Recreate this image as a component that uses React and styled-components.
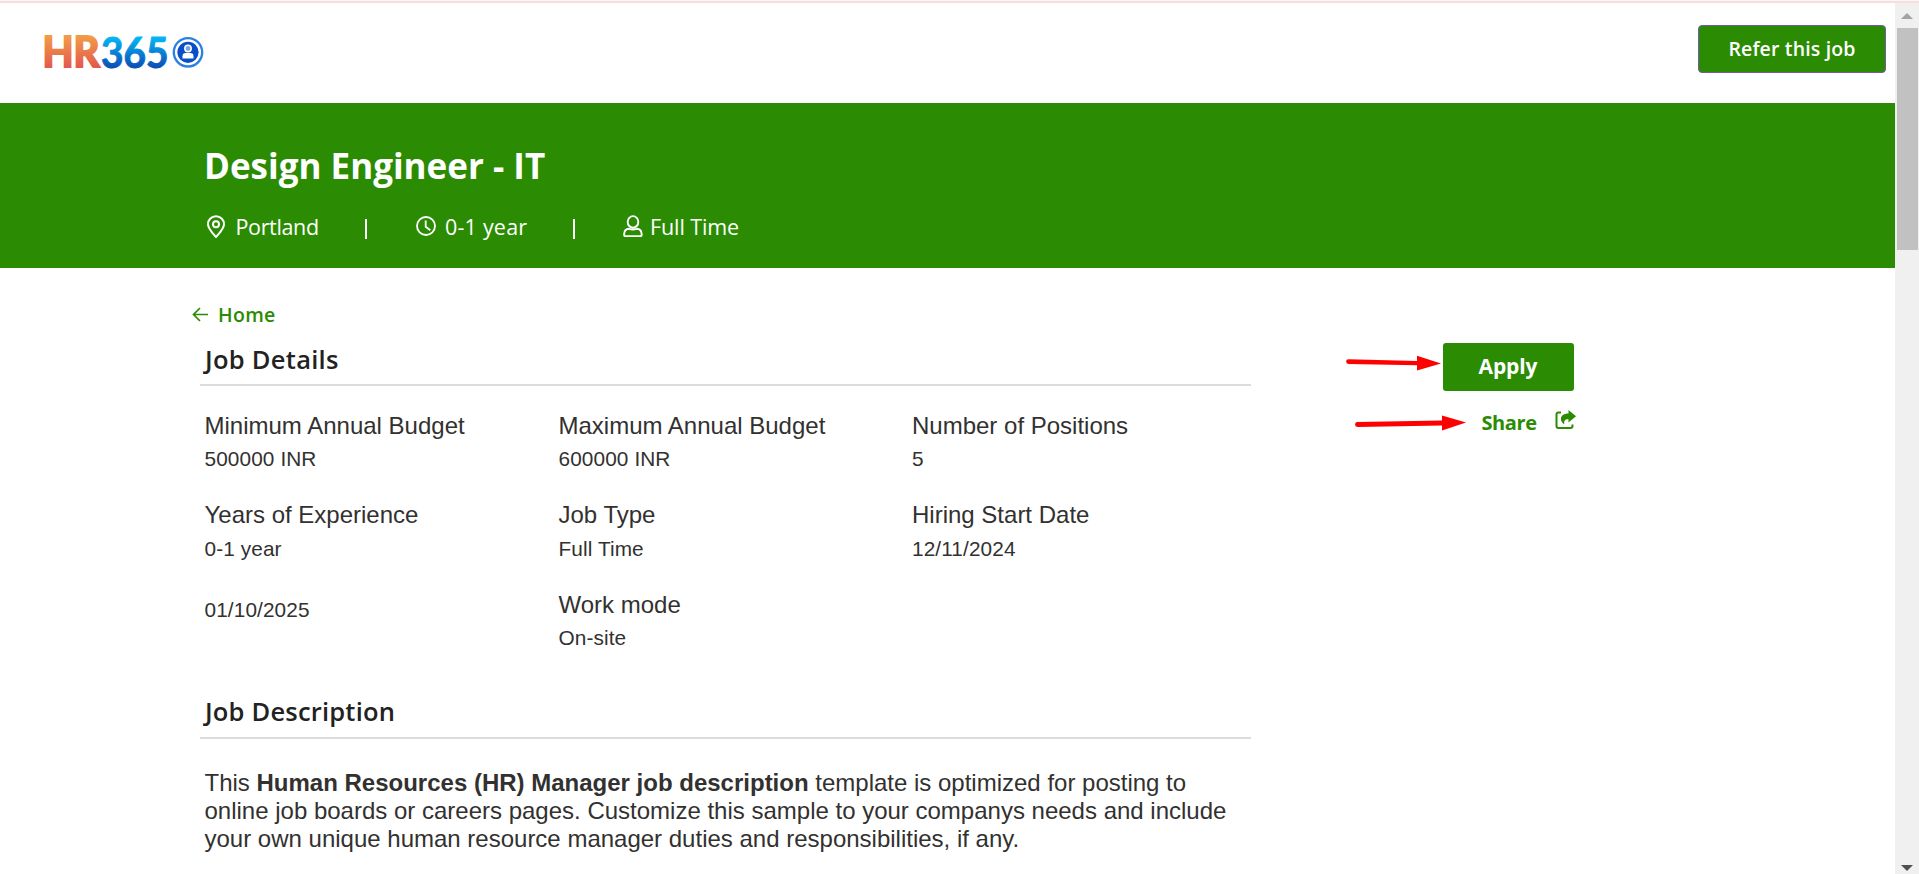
import React from "react";
import styled, { createGlobalStyle } from "styled-components";

const GREEN = "#2b8c03";

const Global = createGlobalStyle`
  * { box-sizing: border-box; }
  html, body { margin: 0; height: 874px; overflow: hidden; background: #fff; }
  h1, h2, p { margin: 0; }
`;

const ui = `"Open Sans", "Noto Sans", sans-serif`;
const body = `"Liberation Sans", Arial, sans-serif`;

const Window = styled.div`
  width: 1919px;
  height: 874px;
  display: flex;
  flex-direction: column;
  overflow: hidden;
  background: #fff;
  font-family: ${ui};
`;
const Strip = styled.div`
  flex: none;
  height: 3px;
  background: #f8dde0;
  border-top: 1px solid #fdf4f4;
`;
const Viewport = styled.div`
  flex: 1;
  display: flex;
  min-height: 0;
`;
const Page = styled.div`
  flex: 1;
  min-width: 0;
  overflow: hidden;
`;

const TopBar = styled.header`
  height: 100px;
  display: flex;
  justify-content: space-between;
  align-items: flex-start;
  padding: 22px 9px 0 40px;
`;
const Logo = styled.svg`
  width: 168px;
  height: 56px;
  font-family: Lato, sans-serif;
  font-size: 42px;
  font-weight: 700;
`;
const ReferButton = styled.button`
  width: 188px;
  height: 48px;
  padding: 0 0 1px;
  border: 1px solid #7658a8;
  border-radius: 4px;
  background: ${GREEN};
  color: #fff;
  font: 600 19.5px/28px ${ui};
  letter-spacing: 0.15px;
`;

const Hero = styled.section`
  height: 165px;
  padding: 39px 0 0 204px;
  background: ${GREEN};
  color: #fff;
`;
const Title = styled.h1`
  font-size: 35px;
  line-height: 48px;
  font-weight: 700;
  letter-spacing: 0;
`;
const Meta = styled.div`
  display: flex;
  align-items: center;
  margin-top: 22px;
  font-size: 21.5px;
  line-height: 30px;
`;
const MetaItem = styled.span`
  display: flex;
  align-items: center;
  width: ${(p) => p.$w}px;
  padding-left: ${(p) => p.$pad || 0}px;
  letter-spacing: ${(p) => p.$ls}px;
  white-space: nowrap;
  svg { flex: none; margin: -2px ${(p) => p.$gap}px 0 2px; }
`;
const Pipe = styled.i`
  width: 2px;
  height: 20px;
  margin-top: 4px;
  background: #fff;
`;

const Content = styled.main`
  display: flex;
  padding: 32px 0 0 200px;
`;
const Main = styled.div`
  width: 1051px;
  margin-right: 192px;
`;
const Back = styled.a`
  display: flex;
  align-items: center;
  gap: 10px;
  margin: 0 0 13px -8px;
  padding-top: 1px;
  height: 28px;
  color: ${GREEN};
  font-size: 19.5px;
  line-height: 28px;
  font-weight: 600;
  letter-spacing: 0.3px;
`;
const SectionTitle = styled.h2`
  height: ${(p) => p.$h}px;
  padding-left: 5px;
  border-bottom: 2px solid #dcdcdc;
  color: #222;
  font-size: 25.5px;
  line-height: 36px;
  font-weight: 600;
  letter-spacing: ${(p) => p.$ls}px;
`;
const Details = styled.div`
  display: grid;
  grid-template-columns: 354px 353.5px 1fr;
  grid-template-rows: 89.2px 89.8px 90px;
  padding: 26px 0 0 4.5px;
  height: 307px;
  color: #323130;
  font-family: ${body};
`;
const Label = styled.div`
  min-height: 5px;
  margin-bottom: ${(p) => (p.$empty ? 0 : 5.4)}px;
  font-size: 24px;
  line-height: 28px;
`;
const Value = styled.div`
  font-size: 20.8px;
  line-height: 28px;
  letter-spacing: 0.1px;
`;
const Description = styled.p`
  padding: 29.5px 0 0 4.5px;
  color: #323130;
  font-family: ${body};
  font-size: 24px;
  line-height: 28.2px;
  white-space: nowrap;
`;

const Actions = styled.aside`
  position: relative;
  width: 140px;
  padding-top: 43px;
`;
const ApplyButton = styled.button`
  display: block;
  width: 131px;
  height: 48px;
  padding: 0 1px 2px 0;
  border: 0;
  border-radius: 3px;
  background: ${GREEN};
  color: #fff;
  font: 700 21px/30px ${ui};
  letter-spacing: -0.1px;
`;
const Share = styled.a`
  display: flex;
  align-items: center;
  justify-content: space-between;
  width: 94px;
  margin: 17px 0 0 38.5px;
  color: ${GREEN};
  font-size: 20px;
  line-height: 30px;
  font-weight: 700;
  letter-spacing: -0.4px;
  svg { margin-top: -6px; }
`;
const Pointers = styled.svg`
  position: absolute;
  left: -103px;
  top: 50px;
  width: 130px;
  height: 90px;
`;

const Scrollbar = styled.div`
  flex: none;
  width: 24px;
  display: flex;
  flex-direction: column;
  align-items: center;
  background: #f0f0f0;
`;
const Thumb = styled.div`
  width: 21px;
  height: 222px;
  margin: 9px 0 auto;
  background: #c1c1c1;
`;
const Caret = styled.svg`
  width: 12px;
  height: 6px;
  margin: ${(p) => p.$m};
`;

const details = [
  ["Minimum Annual Budget", "500000 INR"],
  ["Maximum Annual Budget", "600000 INR"],
  ["Number of Positions", "5"],
  ["Years of Experience", "0-1 year"],
  ["Job Type", "Full Time"],
  ["Hiring Start Date", "12/11/2024"],
  ["", "01/10/2025"],
  ["Work mode", "On-site"],
];

const Brand = () => (
  <Logo viewBox="40 25 168 56">
    <defs>
      <linearGradient id="warm" gradientUnits="userSpaceOnUse" x1="0" y1="37" x2="0" y2="68">
        <stop offset="0" stopColor="#f19a48" />
        <stop offset="1" stopColor="#e3584c" />
      </linearGradient>
      <linearGradient id="cool" gradientUnits="userSpaceOnUse" x1="0" y1="37" x2="0" y2="68">
        <stop offset="0" stopColor="#05b8f5" />
        <stop offset="1" stopColor="#0a4db5" />
      </linearGradient>
    </defs>
    <text x="42.5" y="67.4" textLength="57" lengthAdjust="spacingAndGlyphs" fill="url(#warm)" stroke="url(#warm)" strokeWidth="2.2">HR</text>
    <text x="101" y="67.6" textLength="67.5" lengthAdjust="spacingAndGlyphs" fill="url(#cool)" stroke="url(#cool)" strokeWidth="1">365</text>
    <circle cx="188" cy="52.3" r="14.2" fill="#fff" stroke="#2b80e4" strokeWidth="2.4" />
    <circle cx="188" cy="52.3" r="10.6" fill="#0b4fc6" />
    <circle cx="188" cy="48.5" r="3.2" fill="#7fa3e0" stroke="#fff" strokeWidth="1.5" />
    <path d="M182.500 58.500v-2.200q0-3.200 3.200-3.200h4.600q3.200 0 3.200 3.200v2.200Z" fill="#fff" />
  </Logo>
);

const PinIcon = () => (
  <svg width="20" height="24" viewBox="0 0 20 24" fill="none" stroke="#fff" strokeWidth="2">
    <path d="M10 23C6.5 19 2 14.5 2 10.2a8 8 0 0 1 16 0C18 14.5 13.5 19 10 23Z" />
    <circle cx="10" cy="10.2" r="3" />
  </svg>
);
const ClockIcon = () => (
  <svg width="20" height="20" viewBox="0 0 20 20" fill="none" stroke="#fff" strokeWidth="1.8">
    <circle cx="10" cy="10" r="9" />
    <path d="M9.7 4.500v6.200l4.600 3.600" />
  </svg>
);
const PersonIcon = () => (
  <svg width="20" height="24" viewBox="0 0 20 24" fill="none" stroke="#fff" strokeWidth="1.9">
    <ellipse cx="10" cy="7.900" rx="5.300" ry="5.800" />
    <path d="M6.200 14.800C3 14.800 1.200 17 1.100 20.400c0 1.200.6 1.700 1.600 1.700h14.400c1 0 1.600-.5 1.600-1.700-.1-3.400-1.800-5.600-5-5.600-2.200.8-5.300.8-7.500 0Z" />
  </svg>
);

export default function App() {
  return (
    <Window>
      <Global />
      <Strip />
      <Viewport>
        <Page>
          <TopBar>
            <Brand />
            <ReferButton>Refer this job</ReferButton>
          </TopBar>
          <Hero>
            <Title>Design Engineer - IT</Title>
            <Meta>
              <MetaItem $w={161} $ls={-0.35} $gap={9.5}><PinIcon />Portland</MetaItem>
              <Pipe />
              <MetaItem $w={206} $pad={47} $ls={0.2} $gap={9}><ClockIcon />0-1 year</MetaItem>
              <Pipe />
              <MetaItem $w={180} $pad={45.5} $ls={-0.1} $gap={7.5}><PersonIcon />Full Time</MetaItem>
            </Meta>
          </Hero>
          <Content>
            <Main>
              <Back>
                <svg width="16" height="16" viewBox="0 0 16 16" fill="none" stroke={GREEN} strokeWidth="1.7">
                  <path d="M16 7.500H1.500M8 1 1.500 7.500 8 14" />
                </svg>
                Home
              </Back>
              <SectionTitle $h={45} $ls={0.28}>Job Details</SectionTitle>
              <Details>
                {details.map(([label, value]) => (
                  <div key={value}>
                    <Label $empty={!label}>{label}</Label>
                    <Value>{value}</Value>
                  </div>
                ))}
              </Details>
              <SectionTitle $h={46} $ls={0.2}>Job Description</SectionTitle>
              <Description>
                This <b>Human Resources (HR) Manager job description</b> template is optimized for posting to<br />
                online job boards or careers pages. Customize this sample to your companys needs and include<br />
                your own unique human resource manager duties and responsibilities, if any.
              </Description>
            </Main>
            <Actions>
              <ApplyButton>Apply</ApplyButton>
              <Share>
                Share
                <svg width="21" height="20" viewBox="0 0 21 20" fill="none">
                  <path d="M6 2.500H3.500q-2 0-2 2V16q0 2 2 2h12q2 0 2-2v-1.500" stroke={GREEN} strokeWidth="2" />
                  <path d="M13.500 0 21 6.300l-7.500 6.300V9.200C10 9 8.700 10.500 9.400 14.500 4.500 11 4 3.700 13.500 3.500Z" fill={GREEN} />
                </svg>
              </Share>
              <Pointers viewBox="1340 350 130 90" fill="#f00">
                <path d="M1348.500 359.200 1417 361v-5.200L1441 363.500 1417 370.500v-5.200L1348.500 364a2.400 2.400 0 0 1 0-4.800Z" />
                <path d="M1357.500 422.100 1442 420.500v-5L1466 422.500 1442 430.500v-5L1357.500 427a2.400 2.400 0 0 1 0-4.900Z" />
              </Pointers>
            </Actions>
          </Content>
        </Page>
        <Scrollbar>
          <Caret $m="10px 0 0" viewBox="0 0 12 6"><path d="M0 6 6 0l6 6Z" fill="#a3a3a3" /></Caret>
          <Thumb />
          <Caret $m="0 0 3px" viewBox="0 0 12 6"><path d="M0 0h12L6 6Z" fill="#505050" /></Caret>
        </Scrollbar>
      </Viewport>
    </Window>
  );
}
